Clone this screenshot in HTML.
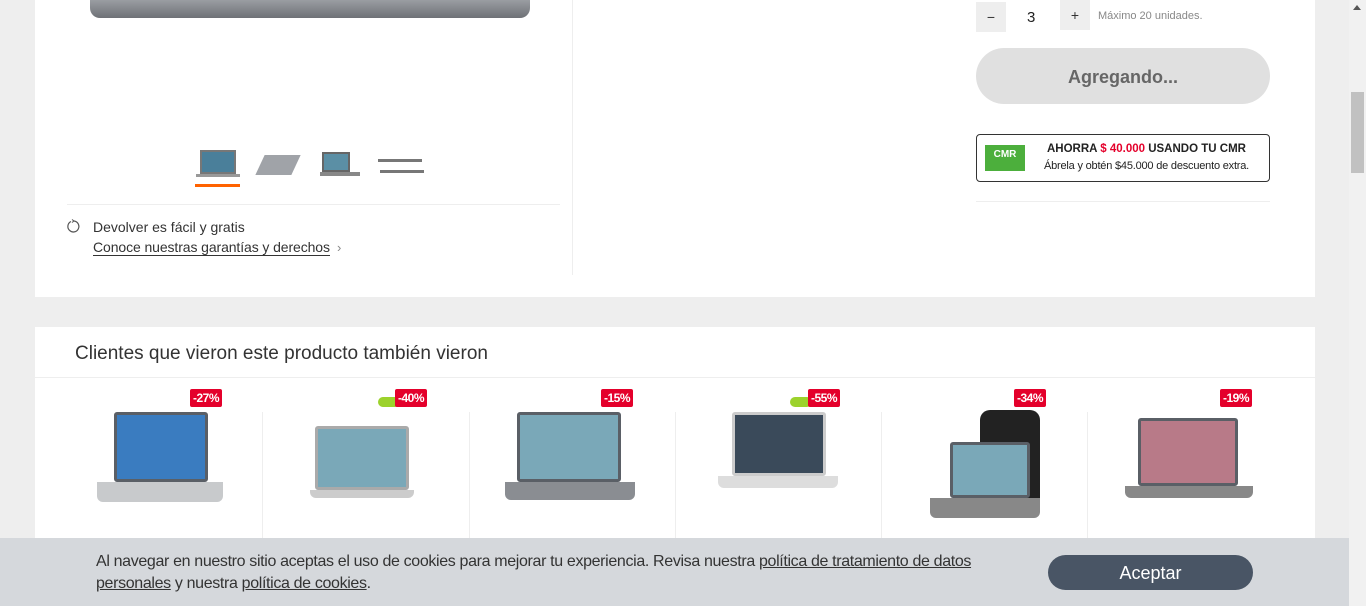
<!DOCTYPE html>
<html><head><meta charset="utf-8"><style>
*{margin:0;padding:0;box-sizing:border-box}
body{width:1366px;height:606px;overflow:hidden;background:#eeeeee;font-family:"Liberation Sans",sans-serif;position:relative;color:#333}
.abs{position:absolute}
.panel{position:absolute;background:#fff}
.badge{position:absolute;background:#e4002b;color:#fff;font-size:12px;font-weight:bold;padding:2px 3px;border-radius:2px;letter-spacing:-0.5px}
.scr{position:absolute;background:#3b4250;border:3px solid #5a5f66;border-radius:3px}
.base{position:absolute;background:#b9bcc0;border-radius:0 0 6px 6px}
</style></head><body>
<div class="panel" style="left:35px;top:0;width:1280px;height:297px"></div>
<div class="abs" style="left:90px;top:0;width:440px;height:18px;background:linear-gradient(#9a9da2,#6e7176);border-radius:0 0 10px 10px"></div>
<div class="abs" style="left:572px;top:0;width:1px;height:275px;background:#eee"></div>
<div class="abs" style="left:200px;top:150px;width:36px;height:24px;background:#4a7f9a;border:2px solid #777"></div>
<div class="abs" style="left:196px;top:174px;width:44px;height:3px;background:#999"></div>
<div class="abs" style="left:195px;top:184px;width:45px;height:3px;background:#ff6200"></div>
<div class="abs" style="left:260px;top:155px;width:36px;height:20px;background:#a0a3a8;transform:skewX(-25deg)"></div>
<div class="abs" style="left:322px;top:152px;width:28px;height:20px;background:#5b8fa5;border:2px solid #666"></div>
<div class="abs" style="left:320px;top:172px;width:40px;height:4px;background:#888"></div>
<div class="abs" style="left:378px;top:159px;width:44px;height:3px;background:#777"></div>
<div class="abs" style="left:380px;top:170px;width:44px;height:3px;background:#777"></div>
<div class="abs" style="left:67px;top:204px;width:493px;height:1px;background:#eee"></div>
<svg class="abs" style="left:66px;top:219px" width="15" height="15" viewBox="0 0 15 15"><path d="M5 2.5 A5.5 5.5 0 1 0 8 2" fill="none" stroke="#555" stroke-width="1.2"/><path d="M6 0.5 L8 2 L6 3.5" fill="none" stroke="#555" stroke-width="1"/></svg>
<div class="abs" style="left:93px;top:219px;font-size:14px;color:#333">Devolver es fácil y gratis</div>
<div class="abs" style="left:93px;top:239px;font-size:14px;color:#333;border-bottom:1px solid #333;line-height:16px;letter-spacing:-0.1px">Conoce nuestras garantías y derechos</div>
<div class="abs" style="left:337px;top:240px;font-size:13px;color:#888">›</div>
<div class="abs" style="left:976px;top:2px;width:30px;height:30px;background:#eee;text-align:center;line-height:30px;font-size:14px">−</div>
<div class="abs" style="left:1027px;top:9px;font-size:15px;color:#222">3</div>
<div class="abs" style="left:1060px;top:0;width:30px;height:30px;background:#eee;text-align:center;line-height:30px;font-size:14px">+</div>
<div class="abs" style="left:1098px;top:10px;font-size:11px;color:#888">Máximo 20 unidades.</div>
<div class="abs" style="left:976px;top:48px;width:294px;height:56px;background:#e0e0e0;border-radius:28px;text-align:center;line-height:58px;font-size:18px;font-weight:bold;color:#666">Agregando...</div>
<div class="abs" style="left:976px;top:134px;width:294px;height:48px;border:1px solid #333;border-radius:4px"></div>
<div class="abs" style="left:985px;top:145px;width:40px;height:26px;background:#4caf3c;color:#fff;font-size:10px;text-align:center;line-height:20px;font-weight:bold">CMR</div>
<div class="abs" style="left:1047px;top:143px;font-size:11.5px;font-weight:bold;color:#222">AHORRA <span style="color:#e4002b">$ 40.000</span> USANDO TU CMR</div>
<div class="abs" style="left:1044px;top:160px;font-size:11px;color:#222;letter-spacing:-0.2px">Ábrela y obtén $45.000 de descuento extra.</div>
<div class="abs" style="left:976px;top:201px;width:294px;height:1px;background:#eee"></div>
<div class="panel" style="left:35px;top:327px;width:1280px;height:279px"></div>
<div class="abs" style="left:75px;top:343px;font-size:19px;color:#333">Clientes que vieron este producto también vieron</div>
<div class="abs" style="left:35px;top:377px;width:1280px;height:1px;background:#eee"></div>
<div class="abs" style="left:262px;top:412px;width:1px;height:130px;background:#eee"></div>
<div class="abs" style="left:469px;top:412px;width:1px;height:130px;background:#eee"></div>
<div class="abs" style="left:675px;top:412px;width:1px;height:130px;background:#eee"></div>
<div class="abs" style="left:881px;top:412px;width:1px;height:130px;background:#eee"></div>
<div class="abs" style="left:1087px;top:412px;width:1px;height:130px;background:#eee"></div>
<div class="scr" style="left:114px;top:412px;width:94px;height:70px;background:#3a7cc0"></div>
<div class="base" style="left:97px;top:482px;width:126px;height:20px;background:#c8cacc"></div>
<div class="scr" style="left:315px;top:426px;width:94px;height:64px;background:#7aa8b8;border-color:#aaa"></div>
<div class="base" style="left:310px;top:490px;width:104px;height:8px;background:#ccc"></div>
<div class="abs" style="left:378px;top:397px;width:22px;height:10px;background:#9cd22c;border-radius:5px"></div>
<div class="scr" style="left:517px;top:412px;width:104px;height:70px;background:#7aa8b8"></div>
<div class="base" style="left:505px;top:482px;width:130px;height:18px;background:#8a8d92"></div>
<div class="scr" style="left:732px;top:412px;width:94px;height:64px;background:#3a4a5a;border-color:#ccc"></div>
<div class="base" style="left:718px;top:476px;width:120px;height:12px;background:#ddd"></div>
<div class="abs" style="left:790px;top:397px;width:22px;height:10px;background:#9cd22c;border-radius:5px"></div>
<div class="abs" style="left:980px;top:410px;width:60px;height:100px;background:#222;border-radius:10px"></div>
<div class="scr" style="left:950px;top:442px;width:80px;height:56px;background:#7aa8b8"></div>
<div class="base" style="left:930px;top:498px;width:110px;height:20px;background:#888"></div>
<div class="scr" style="left:1138px;top:418px;width:100px;height:68px;background:#b87a88"></div>
<div class="base" style="left:1125px;top:486px;width:128px;height:12px;background:#888"></div>
<div class="badge" style="left:190px;top:389px">-27%</div>
<div class="badge" style="left:395px;top:389px">-40%</div>
<div class="badge" style="left:601px;top:389px">-15%</div>
<div class="badge" style="left:808px;top:389px">-55%</div>
<div class="badge" style="left:1014px;top:389px">-34%</div>
<div class="badge" style="left:1220px;top:389px">-19%</div>
<div class="abs" style="left:0;top:538px;width:1349px;height:68px;background:#d5d8dc"></div>
<div class="abs" style="left:96px;top:551px;width:930px;font-size:16px;line-height:22px;color:#333;letter-spacing:-0.35px">Al navegar en nuestro sitio aceptas el uso de cookies para mejorar tu experiencia. Revisa nuestra <u>política de tratamiento de datos</u> <u>personales</u> y nuestra <u>política de cookies</u>.</div>
<div class="abs" style="left:1048px;top:555px;width:205px;height:35px;background:#495565;border-radius:18px;color:#fff;font-size:18px;text-align:center;line-height:36px">Aceptar</div>
<div class="abs" style="left:1349px;top:0;width:17px;height:606px;background:#f1f1f1"></div>
<div class="abs" style="left:1351px;top:92px;width:13px;height:81px;background:#c1c1c1"></div>
<div class="abs" style="left:1353px;top:5px;width:0;height:0;border-left:4px solid transparent;border-right:4px solid transparent;border-bottom:5px solid #555"></div>
</body></html>
